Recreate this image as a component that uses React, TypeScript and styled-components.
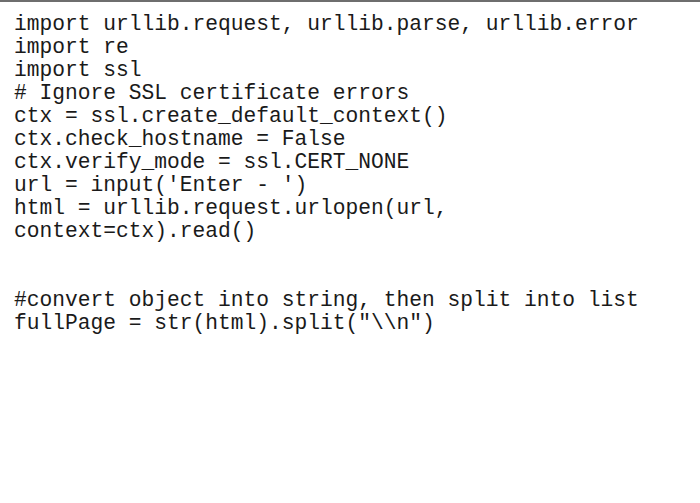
import React from "react";
import styled, { createGlobalStyle } from "styled-components";

const Global = createGlobalStyle`
  html, body { margin: 0; padding: 0; background: #ffffff; }
`;

const Page = styled.div`
  width: 700px;
  height: 503px;
  box-sizing: border-box;
  border-top: 2px solid #6e6e6e;
  background: #ffffff;
  padding: 11px 14px 0 14px;
`;

const Code = styled.pre`
  margin: 0;
  font-family: "Liberation Mono", "Courier New", monospace;
  font-size: 21.25px;
  line-height: 23px;
  color: #1a1a1a;
  white-space: pre;
`;

const lines = [
  "import urllib.request, urllib.parse, urllib.error",
  "import re",
  "import ssl",
  "# Ignore SSL certificate errors",
  "ctx = ssl.create_default_context()",
  "ctx.check_hostname = False",
  "ctx.verify_mode = ssl.CERT_NONE",
  "url = input('Enter - ')",
  "html = urllib.request.urlopen(url,",
  "context=ctx).read()",
  "",
  "",
  "#convert object into string, then split into list",
  'fullPage = str(html).split("\\\\n")',
];

export default function App() {
  return (
    <>
      <Global />
      <Page>
        <Code>{lines.join("\n")}</Code>
      </Page>
    </>
  );
}
